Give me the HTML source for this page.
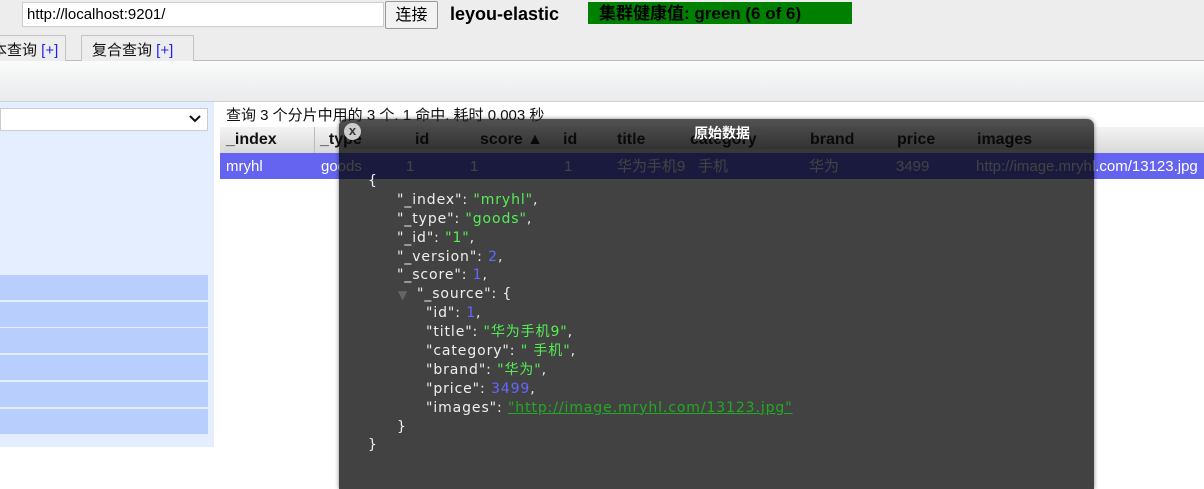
<!DOCTYPE html>
<html><head><meta charset="utf-8"><style>
*{box-sizing:border-box;margin:0;padding:0}
body{width:1204px;height:474px;overflow:hidden;background:#fff;font-family:"Liberation Sans","Noto Sans CJK SC",sans-serif;position:relative}
.a{position:absolute}
.top{left:0;top:0;width:1204px;height:61px;background:#ededed;border-bottom:1px solid #bbb}
.tb{left:0;top:61px;width:1204px;height:41px;background:linear-gradient(#fafbfb,#e9ebec);border-bottom:1px solid #d0d0d0}
.side{left:0;top:102px;width:214px;height:345px;background:#e4eeff}
.br{left:0;width:208px;height:25px;background:#b8cffd}
.tab{top:35px;height:26px;border:1px solid #c4c4c4;border-bottom:none;background:#ededed;font-size:15px;line-height:30px;padding:0 10px;color:#111;white-space:nowrap;overflow:hidden}
.tab b{font-weight:normal;color:#22e}
.th{top:127px;height:26px;font-weight:bold;font-size:16px;line-height:26px;color:#111}
.td{top:153px;height:26px;font-size:15px;line-height:27px;color:#fff}
.dlg{left:339px;top:119px;width:755px;height:370px;background:rgba(0,0,0,0.74);border-radius:7px 7px 0 0;box-shadow:0 0 4px rgba(0,0,0,.5)}
.json{left:368px;top:172px;font-family:"DejaVu Sans","Noto Sans CJK SC",sans-serif;font-size:14px;line-height:18.9px;color:#eee;white-space:nowrap;letter-spacing:.9px}
.json div{height:18.9px}
.k1{padding-left:29px}.k2{padding-left:58px}
.s{color:#5e5}.n{color:#66f}.l{color:#2a2;text-decoration:underline}
</style></head><body>
<div class="a top"></div>
<div class="a" style="left:22px;top:2px;width:362px;height:25px;background:#fff;border:1px solid #ccc;font-size:15px;line-height:24px;padding-left:4px">http://localhost:9201/</div>
<div class="a" style="left:385px;top:1px;width:53px;height:28px;background:#f2f2f2;border:1px solid #999;border-radius:2px;font-size:16px;line-height:27px;text-align:center">连接</div>
<div class="a" style="left:450px;top:2px;font-size:18px;font-weight:bold;line-height:24px">leyou-elastic</div>
<div class="a" style="left:588px;top:2px;width:264px;height:22px;background:#008000;font-size:17px;font-weight:bold;line-height:23px;padding-left:11px;color:#000">集群健康值: green (6 of 6)</div>
<div class="a tab" style="left:-34px;width:100px">基本查询 <b>[+]</b></div>
<div class="a tab" style="left:81px;width:113px">复合查询 <b>[+]</b></div>
<div class="a tb"></div>
<div class="a side"></div>
<div class="a" style="left:0;top:108px;width:208px;height:23px;background:#fff;border:1px solid #ccc"></div>
<svg class="a" style="left:188px;top:114px" width="14" height="10"><path d="M2 2l5 5 5-5" stroke="#111" stroke-width="2" fill="none"/></svg>
<div class="a br" style="top:275px"></div><div class="a br" style="top:302px"></div><div class="a br" style="top:328px"></div><div class="a br" style="top:355px"></div><div class="a br" style="top:382px"></div><div class="a br" style="top:409px"></div>
<div class="a" style="left:226px;top:106px;font-size:15px;line-height:20px;color:#111">查询 3 个分片中用的 3 个. 1 命中. 耗时 0.003 秒</div>
<div class="a" style="left:220px;top:127px;width:984px;height:26px;background:linear-gradient(#f4f4f4,#d8d8d8)"></div>
<div class="a" style="left:314px;top:127px;width:1px;height:26px;background:#bbb"></div>
<div class="a th" style="left:226px">_index</div>
<div class="a th" style="left:320px">_type</div>
<div class="a th" style="left:415px">id</div>
<div class="a th" style="left:480px">score ▲</div>
<div class="a th" style="left:563px">id</div>
<div class="a th" style="left:617px">title</div>
<div class="a th" style="left:690px">category</div>
<div class="a th" style="left:810px">brand</div>
<div class="a th" style="left:897px">price</div>
<div class="a th" style="left:977px">images</div>
<div class="a" style="left:220px;top:153px;width:984px;height:26px;background:#6464f0"></div>
<div class="a td" style="left:226px">mryhl</div>
<div class="a td" style="left:321px">goods</div>
<div class="a td" style="left:406px">1</div>
<div class="a td" style="left:470px">1</div>
<div class="a td" style="left:564px">1</div>
<div class="a td" style="left:617px">华为手机9</div>
<div class="a td" style="left:698px">手机</div>
<div class="a td" style="left:809px">华为</div>
<div class="a td" style="left:896px">3499</div>
<div class="a td" style="left:976px">http://image.mryhl.com/13123.jpg</div>
<div class="a dlg"></div>
<div class="a" style="left:339px;top:119px;width:755px;height:30px;border-radius:7px 7px 0 0;background:linear-gradient(rgba(255,255,255,.08),rgba(0,0,0,.1))"></div>
<div class="a" style="left:344px;top:123px;width:17px;height:17px;border-radius:50%;background:#ccc;color:#333;font-size:13px;font-weight:bold;line-height:16px;text-align:center">x</div>
<div class="a" style="left:694px;top:124px;font-size:14px;font-weight:bold;color:#fff;line-height:18px">原始数据</div>
<div class="a json"><div>{</div><div class="k1">"_index": <span class="s">"mryhl"</span>,</div><div class="k1">"_type": <span class="s">"goods"</span>,</div><div class="k1">"_id": <span class="s">"1"</span>,</div><div class="k1">"_version": <span class="n">2</span>,</div><div class="k1">"_score": <span class="n">1</span>,</div><div class="k1" style="position:relative"><span style="position:absolute;left:30px;top:1px;color:#666;font-size:12px">▼</span><span style="padding-left:20px">"_source": {</span></div><div class="k2">"id": <span class="n">1</span>,</div><div class="k2">"title": <span class="s">"华为手机9"</span>,</div><div class="k2">"category": <span class="s">" 手机"</span>,</div><div class="k2">"brand": <span class="s">"华为"</span>,</div><div class="k2">"price": <span class="n">3499</span>,</div><div class="k2">"images": <span class="l">"http://image.mryhl.com/13123.jpg"</span></div><div class="k1">}</div><div>}</div></div>
</body></html>
